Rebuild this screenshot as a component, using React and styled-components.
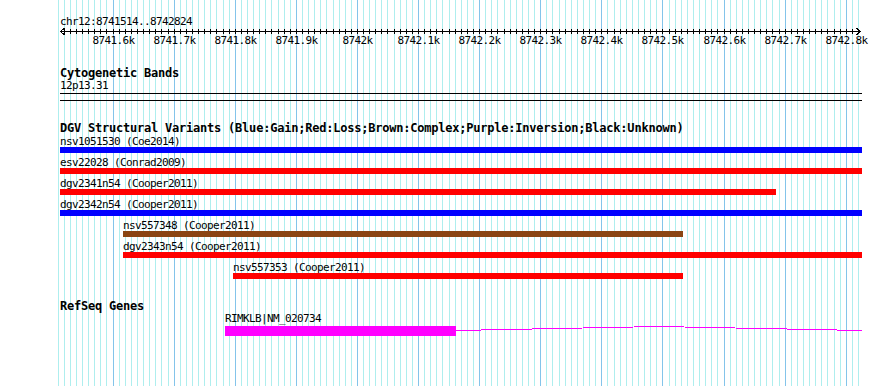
import styled, { createGlobalStyle } from "styled-components";

const GlobalStyle = createGlobalStyle`
  body {
    margin: 0;
    background: #fff;
  }
`;

const START = 8741514;
const END = 8742824;
const PX_PER_BP = 0.611;
const ORIGIN_X = 60;
const TRACK_WIDTH = 802;

const toX = (bp) => (bp - START) * PX_PER_BP;
const snap = (bp) => Math.round(ORIGIN_X + toX(bp)) - ORIGIN_X + 0.5;

const gridStops = [];
for (let bp = 8741510; bp <= 8742820; bp += 10) gridStops.push(bp);
const majors = gridStops.filter((bp) => bp % 100 === 0);
const ticks = gridStops.filter((bp) => bp > START && bp < END);

const variants = [
  { name: "nsv1051530", study: "Coe2014", kind: "gain", start: 8741400, end: 8743000 },
  { name: "esv22028", study: "Conrad2009", kind: "loss", start: 8741400, end: 8743000 },
  { name: "dgv2341n54", study: "Cooper2011", kind: "loss", start: 8741400, end: 8742686 },
  { name: "dgv2342n54", study: "Cooper2011", kind: "gain", start: 8741400, end: 8743000 },
  { name: "nsv557348", study: "Cooper2011", kind: "complex", start: 8741617, end: 8742534 },
  { name: "dgv2343n54", study: "Cooper2011", kind: "loss", start: 8741617, end: 8743000 },
  { name: "nsv557353", study: "Cooper2011", kind: "loss", start: 8741797, end: 8742534 },
];

const gene = {
  name: "RIMKLB|NM_020734",
  start: 8741784,
  thickEnd: 8742162,
  end: 8743000,
};

const COLORS = {
  gain: "#0000ff",
  loss: "#ff0000",
  complex: "#8b4513",
};

const span = (start, end) => {
  const left = Math.max(0, Math.round(toX(start)));
  const right = Math.min(TRACK_WIDTH, Math.round(toX(end)));
  return { left, width: right - left };
};

export default function App() {
  const geneSpan = span(gene.start, gene.end);
  const thick = span(gene.start, gene.thickEnd);
  const peak = (thick.left + thick.width + geneSpan.left + geneSpan.width) / 2;

  return (
    <>
      <GlobalStyle />
      <Panel>
        <Grid width="890" height="386">
          {gridStops.map((bp) => (
            <line
              key={bp}
              x1={snap(bp) + ORIGIN_X}
              x2={snap(bp) + ORIGIN_X}
              y1="0"
              y2="386"
              stroke={bp % 100 === 0 ? "#84c4ea" : "#aeeeee"}
            />
          ))}
        </Grid>

        <Content>
          <Label>chr12:{START}..{END}</Label>
          <Ruler width={TRACK_WIDTH} height="8">
            <line x1="0" x2="800" y1="4.5" y2="4.5" stroke="#000" />
            {ticks.map((bp) => (
              <line key={bp} x1={snap(bp)} x2={snap(bp)} y1="2" y2="7" stroke="#000" />
            ))}
            <path d="M4.5,1 L0.5,4.5 L4.5,8" fill="none" stroke="#000" />
            <path d="M796.5,1 L800.5,4.5 L796.5,8" fill="none" stroke="#000" />
          </Ruler>
          <TickLabels>
            {majors.map((bp) => (
              <TickLabel key={bp} style={{ left: snap(bp) }}>
                {bp / 1000}k
              </TickLabel>
            ))}
          </TickLabels>

          <TrackTitle>Cytogenetic Bands</TrackTitle>
          <Label $gap={1}>12p13.31</Label>
          <Band />

          <TrackTitle>
            DGV Structural Variants
            (Blue:Gain;Red:Loss;Brown:Complex;Purple:Inversion;Black:Unknown)
          </TrackTitle>
          <FeatureList>
            {variants.map((v) => {
              const { left, width } = span(v.start, v.end);
              return (
                <Feature key={v.name} style={{ marginLeft: left }}>
                  <Label>
                    {v.name} ({v.study})
                  </Label>
                  <Bar $kind={v.kind} style={{ width }} />
                </Feature>
              );
            })}
          </FeatureList>

          <TrackTitle>RefSeq Genes</TrackTitle>
          <Label $gap={1} style={{ marginLeft: geneSpan.left }}>
            {gene.name}
          </Label>
          <GeneGlyph width={TRACK_WIDTH} height="10">
            <rect x={thick.left} y="0" width={thick.width} height="10" fill="#ff00ff" />
            <polyline
              points={`${thick.left + thick.width},4.5 ${peak},0.5 ${geneSpan.left + geneSpan.width},4.5`}
              fill="none"
              stroke="#ff00ff"
              shapeRendering="crispEdges"
            />
          </GeneGlyph>
        </Content>
      </Panel>
    </>
  );
}

const Panel = styled.div`
  position: relative;
  width: 890px;
  height: 386px;
  overflow: hidden;
  box-sizing: border-box;
  padding: 16px 0 0 ${ORIGIN_X}px;
  background: #fff;
`;

const Grid = styled.svg`
  position: absolute;
  left: 0;
  top: 0;
  shape-rendering: crispEdges;
`;

const Content = styled.div`
  position: relative;
  width: ${TRACK_WIDTH}px;
  display: flex;
  flex-direction: column;
  align-items: flex-start;
  color: #000;
`;

const Label = styled.div`
  margin-top: ${(p) => p.$gap || 0}px;
  font-family: "DejaVu Sans Mono", "Liberation Mono", monospace;
  font-size: 11px;
  letter-spacing: -0.62px;
  line-height: 11px;
  white-space: pre;
`;

const TrackTitle = styled.div`
  margin-top: 21px;
  font-family: "DejaVu Sans Mono", "Liberation Mono", monospace;
  font-weight: bold;
  font-size: 12px;
  letter-spacing: -0.22px;
  line-height: 12px;
  white-space: nowrap;
`;

const Ruler = styled.svg`
  display: block;
  shape-rendering: crispEdges;
`;

const TickLabels = styled.div`
  position: relative;
  width: 100%;
  height: 11px;
`;

const TickLabel = styled.span`
  position: absolute;
  top: 0;
  transform: translateX(-50%);
  font-family: "DejaVu Sans Mono", "Liberation Mono", monospace;
  font-size: 11px;
  letter-spacing: -0.62px;
  line-height: 11px;
  white-space: nowrap;
`;

const Band = styled.div`
  margin-top: 2px;
  width: 100%;
  height: 8px;
  box-sizing: border-box;
  border-top: 1px solid #000;
  border-bottom: 1px solid #000;
`;

const FeatureList = styled.div`
  margin-top: 2px;
  display: flex;
  flex-direction: column;
  gap: 4px;
`;

const Feature = styled.div`
  display: flex;
  flex-direction: column;
  align-items: flex-start;
`;

const Bar = styled.div`
  height: 6px;
  background: ${(p) => COLORS[p.$kind]};
`;

const GeneGlyph = styled.svg`
  display: block;
  margin-top: 2px;
`;
